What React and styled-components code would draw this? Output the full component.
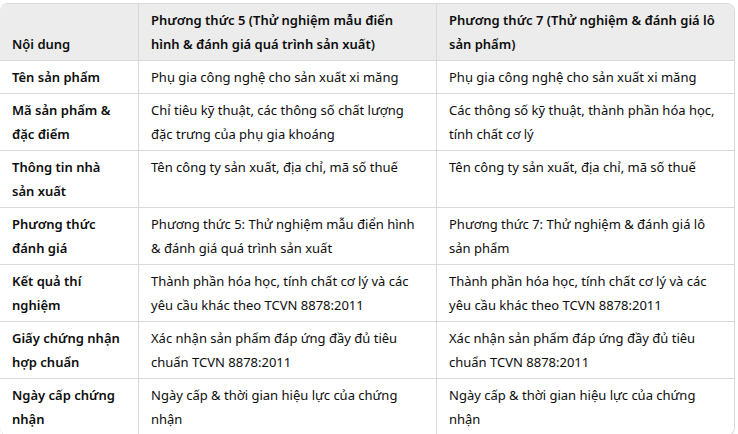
import React from 'react';
import styled, { createGlobalStyle } from 'styled-components';

const GlobalStyle = createGlobalStyle`
  html, body {
    margin: 0;
    padding: 0;
    background: #ffffff;
  }
  body {
    font-family: "Noto Sans", "Open Sans", sans-serif;
    color: #0d0d0d;
    overflow: hidden;
  }
`;

const Page = styled.div`
  width: 738px;
  height: 434px;
  padding-top: 3px;
  box-sizing: border-box;
`;

const Table = styled.table`
  width: 735px;
  border-collapse: separate;
  border-spacing: 0;
  table-layout: fixed;
  border: 1px solid #d9d9d9;
  border-left: none;
  border-radius: 8px;
  font-size: 13px;
  line-height: 24px;
`;

const HeadCell = styled.th`
  background: #ececec;
  font-weight: 600;
  text-align: left;
  vertical-align: bottom;
  padding: 4px 12px;
  border-left: ${(p) => (p.$first ? 'none' : '1px solid #d9d9d9')};
  border-bottom: 1px solid #d9d9d9;
  &:first-child {
    border-top-left-radius: 8px;
  }
  &:last-child {
    border-top-right-radius: 7px;
  }
`;

const Cell = styled.td`
  font-weight: ${(p) => (p.$label ? 600 : 400)};
  vertical-align: top;
  padding: 4px 12px;
  border-left: ${(p) => (p.$label ? 'none' : '1px solid #d9d9d9')};
  border-bottom: ${(p) => (p.$last ? 'none' : '1px solid #d9d9d9')};
`;

const rows = [
  ['Tên sản phẩm', 'Phụ gia công nghệ cho sản xuất xi măng', 'Phụ gia công nghệ cho sản xuất xi măng'],
  ['Mã sản phẩm & đặc điểm', 'Chỉ tiêu kỹ thuật, các thông số chất lượng đặc trưng của phụ gia khoáng', 'Các thông số kỹ thuật, thành phần hóa học, tính chất cơ lý'],
  ['Thông tin nhà sản xuất', 'Tên công ty sản xuất, địa chỉ, mã số thuế', 'Tên công ty sản xuất, địa chỉ, mã số thuế'],
  ['Phương thức đánh giá', 'Phương thức 5: Thử nghiệm mẫu điển hình & đánh giá quá trình sản xuất', 'Phương thức 7: Thử nghiệm & đánh giá lô sản phẩm'],
  ['Kết quả thí nghiệm', 'Thành phần hóa học, tính chất cơ lý và các yêu cầu khác theo TCVN 8878:2011', 'Thành phần hóa học, tính chất cơ lý và các yêu cầu khác theo TCVN 8878:2011'],
  ['Giấy chứng nhận hợp chuẩn', 'Xác nhận sản phẩm đáp ứng đầy đủ tiêu chuẩn TCVN 8878:2011', 'Xác nhận sản phẩm đáp ứng đầy đủ tiêu chuẩn TCVN 8878:2011'],
  ['Ngày cấp chứng nhận', 'Ngày cấp & thời gian hiệu lực của chứng nhận', 'Ngày cấp & thời gian hiệu lực của chứng nhận'],
];

export default function App() {
  return (
    <Page>
      <GlobalStyle />
      <Table>
        <colgroup>
          <col style={{ width: 138 }} />
          <col style={{ width: 298 }} />
          <col />
        </colgroup>
        <thead>
          <tr>
            <HeadCell $first>Nội dung</HeadCell>
            <HeadCell>Phương thức 5 (Thử nghiệm mẫu điển hình &amp; đánh giá quá trình sản xuất)</HeadCell>
            <HeadCell>Phương thức 7 (Thử nghiệm &amp; đánh giá lô sản phẩm)</HeadCell>
          </tr>
        </thead>
        <tbody>
          {rows.map((r, i) => (
            <tr key={i}>
              <Cell $label $last={i === rows.length - 1}>{r[0]}</Cell>
              <Cell $last={i === rows.length - 1}>{r[1]}</Cell>
              <Cell $last={i === rows.length - 1}>{r[2]}</Cell>
            </tr>
          ))}
        </tbody>
      </Table>
    </Page>
  );
}
